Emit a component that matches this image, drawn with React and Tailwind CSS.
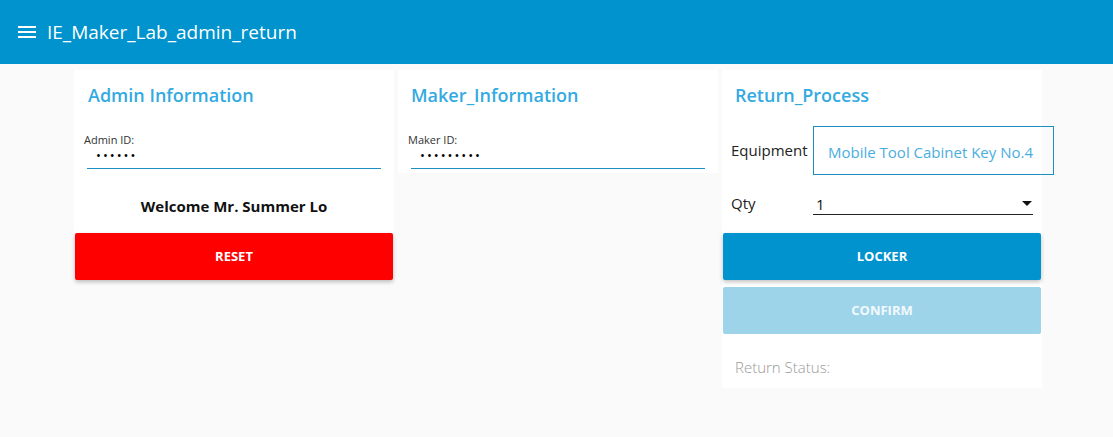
import { useState } from 'react';

const font = { fontFamily: '"Open Sans", "Noto Sans", sans-serif' };

const IdField = ({ label, value, onChange }) => (
  <div className="mx-[13px] mt-[25px]">
    <div className="-ml-[3px] text-[11px] leading-[14px] text-[#333]">{label}</div>
    <input
      type="password"
      value={value}
      onChange={(e) => onChange(e.target.value)}
      className="block w-full h-[22px] pl-[9px] pb-[5px] border-b border-[#1a8fc0] text-[13px] leading-[16px] tracking-[2px] text-black outline-none bg-transparent"
    />
  </div>
);

const App = () => {
  const [adminId, setAdminId] = useState('123456');
  const [makerId, setMakerId] = useState('123456789');
  const [qty, setQty] = useState('1');

  return (
    <div className="min-h-[437px] bg-[#fafafa]" style={font}>
      <header className="h-[64px] bg-[#0093cd] flex items-center pl-[18px] text-white">
        <svg width="18" height="14" viewBox="0 0 18 14" className="mr-[11px]">
          <rect x="0" y="1" width="18" height="2" fill="white" />
          <rect x="0" y="6" width="18" height="2" fill="white" />
          <rect x="0" y="11" width="18" height="2" fill="white" />
        </svg>
        <h1 className="text-[19px] leading-[26px]">IE_Maker_Lab_admin_return</h1>
      </header>

      <div className="flex items-start gap-[4px] pl-[74px] pt-[6px]">
        {/* admin */}
        <div className="w-[320px] flex flex-col">
          <div className="bg-white">
            <h2 className="pt-[12px] pl-[14px] text-[18px] leading-[26px] font-semibold text-[#33aae1]">
              Admin Information
            </h2>
            <IdField label="Admin ID:" value={adminId} onChange={setAdminId} />
            <p className="pt-[27px] h-[64px] text-center text-[15px] leading-[20px] font-bold text-[#111]">
              Welcome Mr. Summer Lo
            </p>
          </div>
          <button className="mx-[1px] h-[47px] rounded-[2px] bg-[#ff0000] text-white text-[13px] font-bold shadow-[0_2px_4px_rgba(0,0,0,0.25)]">
            RESET
          </button>
        </div>

        {/* maker */}
        <div className="w-[320px] bg-white pb-[4px]">
          <h2 className="pt-[12px] pl-[13px] text-[18px] leading-[26px] font-semibold text-[#33aae1]">
            Maker_Information
          </h2>
          <IdField label="Maker ID:" value={makerId} onChange={setMakerId} />
        </div>

        {/* return */}
        <div className="w-[320px] bg-white pb-[11px]">
          <h2 className="pt-[12px] pl-[13px] text-[18px] leading-[26px] font-semibold text-[#33aae1]">
            Return_Process
          </h2>
          <div className="mt-[18px] flex items-center pl-[9px]">
            <span className="w-[82px] shrink-0 text-[15px] text-[#222]">Equipment</span>
            <div className="w-[241px] h-[49px] shrink-0 border border-[#1a8fc0] flex items-center pl-[14px] pt-[3px] text-[15px] text-[#4aaee0]">
              Mobile Tool Cabinet Key No.4
            </div>
          </div>
          <div className="mt-[17px] flex items-center pl-[9px]">
            <span className="w-[82px] shrink-0 text-[15px] text-[#222]">Qty</span>
            <div className="relative w-[220px] h-[23px] border-b-[1.5px] border-[#222]">
              <select
                value={qty}
                onChange={(e) => setQty(e.target.value)}
                className="appearance-none w-full h-full pl-[3px] text-[15px] text-[#111] bg-transparent outline-none"
              >
                <option value="1">1</option>
                <option value="2">2</option>
                <option value="3">3</option>
              </select>
              <svg width="10" height="5" viewBox="0 0 10 5" className="absolute right-[1px] top-[9px] pointer-events-none">
                <path d="M0 0 L10 0 L5 5 Z" fill="#111" />
              </svg>
            </div>
          </div>
          <div className="mt-[18px] flex flex-col gap-[7px] px-[1px]">
            <button className="h-[47px] rounded-[2px] bg-[#0093cd] text-white text-[13px] font-bold shadow-[0_2px_4px_rgba(0,0,0,0.25)]">
              LOCKER
            </button>
            <button disabled className="h-[47px] rounded-[2px] bg-[#9dd4ea] text-[#f2f9fc] text-[13px] font-bold">
              CONFIRM
            </button>
          </div>
          <p className="mt-[23px] pl-[13px] text-[15px] leading-[20px] font-light text-[#999]">Return Status:</p>
        </div>
      </div>
    </div>
  );
};

export default App;
